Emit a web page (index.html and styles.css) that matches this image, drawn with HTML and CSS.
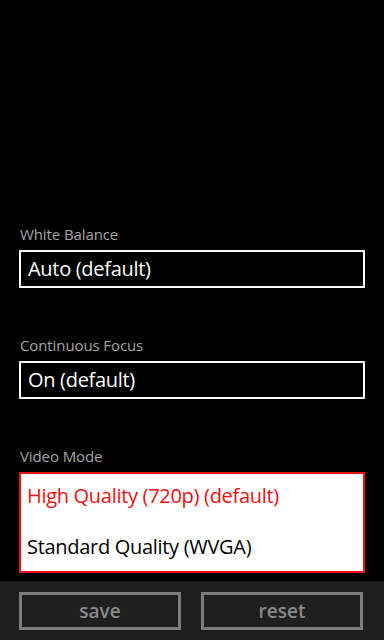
FILE: index.html
```html
<!DOCTYPE html>
<html lang="en">
<head>
<meta charset="utf-8">
<title>Camera settings</title>
<link rel="stylesheet" href="styles.css">
</head>
<body>
<div class="screen">
  <main class="content">
    <section class="field">
      <div class="label">White Balance</div>
      <div class="picker"><span class="value">Auto (default)</span></div>
    </section>
    <section class="field">
      <div class="label">Continuous Focus</div>
      <div class="picker"><span class="value">On (default)</span></div>
    </section>
    <section class="field field-last">
      <div class="label">Video Mode</div>
      <div class="picker picker-open">
        <div class="option option-selected">High Quality (720p) (default)</div>
        <div class="option">Standard Quality (WVGA)</div>
      </div>
    </section>
  </main>
  <footer class="appbar">
    <button class="btn">save</button>
    <button class="btn">reset</button>
  </footer>
</div>
</body>
</html>
```
FILE: styles.css
```css
html, body {
  margin: 0;
  padding: 0;
  background: #000;
}
body {
  font-family: "Open Sans", "Noto Sans", "Liberation Sans", sans-serif;
  color: #fff;
}
.screen {
  width: 384px;
  height: 640px;
  display: flex;
  flex-direction: column;
  overflow: hidden;
}
.content {
  height: 581px;
  box-sizing: border-box;
  display: flex;
  flex-direction: column;
  justify-content: flex-end;
  padding: 0 19px 8px 19px;
}
.field {
  display: flex;
  flex-direction: column;
  margin-bottom: 47px;
}
.field-last {
  margin-bottom: 0;
}
.label {
  font-size: 15px;
  line-height: 20px;
  color: #a4a4a4;
  margin-bottom: 6px;
  padding-left: 1px;
  letter-spacing: -0.1px;
}
.picker {
  height: 38px;
  box-sizing: border-box;
  border: 2px solid #fff;
  padding: 0 7px;
  font-size: 20px;
  line-height: 34px;
  letter-spacing: -0.3px;
  white-space: nowrap;
}
.picker-open {
  height: 101px;
  border-color: #ee1111;
  background: #fff;
  color: #000;
  display: flex;
  flex-direction: column;
  gap: 7px;
  padding: 0 6px;
}
.option {
  line-height: 44px;
}
.option-selected {
  color: #ee1111;
}
.appbar {
  flex: 1;
  background: #1f1f1f;
  display: flex;
  gap: 20px;
  padding: 11px 21px 0 19px;
  align-items: flex-start;
}
.btn {
  flex: 1;
  height: 38px;
  box-sizing: border-box;
  border: 3px solid #7c7c7c;
  background: transparent;
  color: #8a8a8a;
  font-family: "Open Sans", "Noto Sans", "Liberation Sans", sans-serif;
  font-size: 19px;
  font-weight: 600;
  line-height: 32px;
  padding: 0;
  margin: 0;
}
```
